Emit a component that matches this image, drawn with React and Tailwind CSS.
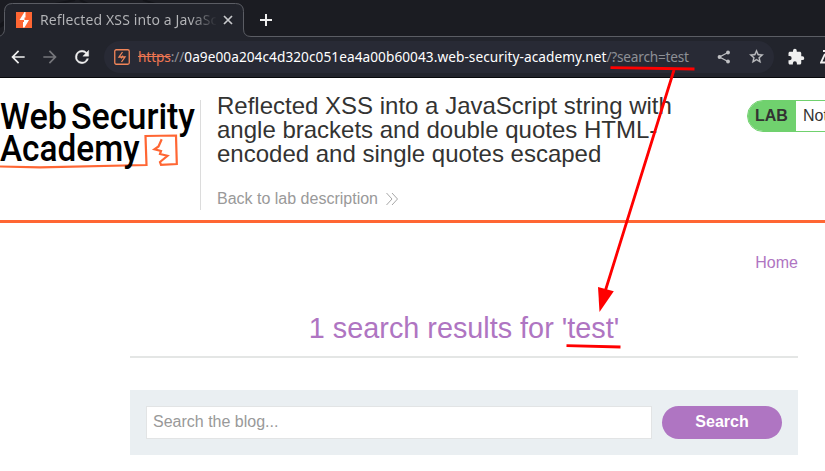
import React from 'react';

function TabStrip() {
  return (
    <div className="relative flex h-9 items-start bg-[#1b1c22]">
      <svg className="absolute left-0 top-0" width="825" height="37" viewBox="0 0 825 37" fill="none">
        <path d="M0 25L14 14M55 4L75 0M80 0l8 4M143 0l12 4M0 27l5-3" stroke="#131419" strokeWidth="2" />
        <path d="M-3 36.500C2 36.500 4.500 33 4.500 29V11.500Q4.500 3.500 12.500 3.500H235.500Q243.500 3.500 243.500 11.500V29Q243.500 36.500 251 36.500H825V37H-3Z" fill="#22242c" />
        <path d="M-3 36.500C2 36.500 4.500 33 4.500 29V11.500Q4.500 3.500 12.500 3.500H235.500Q243.500 3.500 243.500 11.500V29Q243.500 36.500 251 36.500H825" stroke="#5b5d64" />
      </svg>
      <div className="relative flex h-9 w-[243px] items-center pl-4 pt-[3px]">
        <svg width="16" height="16" viewBox="0 0 16 16" className="shrink-0">
          <path d="M0 0H16V16H0Z" fill="#ff6633" />
          <path d="M8.500 0H9.500V5.500H8.500V8H13L8.500 15.500H7V10H8V8H3.500Z" fill="#fff" />
        </svg>
        <div className="ml-2 w-[177px] overflow-hidden whitespace-nowrap bg-gradient-to-r from-[#b5b6b9] from-85% to-transparent bg-clip-text font-['Noto_Sans',sans-serif] text-[14px] leading-5 tracking-[0.12px] text-transparent">
          Reflected XSS into a JavaScript
        </div>
        <svg className="ml-[6px] shrink-0" width="10" height="10" viewBox="0 0 10 10" stroke="#c8c9cc" strokeWidth="1.700">
          <path d="M1 1L9 9M9 1L1 9" />
        </svg>
      </div>
      <svg className="relative ml-[17px] mt-[14px]" width="12" height="12" viewBox="0 0 12 12" stroke="#efefef" strokeWidth="2">
        <path d="M6 0V12M0 6H12" />
      </svg>
    </div>
  );
}

function AddressBar() {
  return (
    <div className="flex h-[41px] items-center bg-[#22242c]">
      <div className="flex w-[104px] shrink-0 items-center pl-[8px]">
        <svg className="shrink-0" width="20" height="20" viewBox="0 0 24 24" fill="#efefef">
          <path d="M20 11H7.830l5.590-5.590L12 4l-8 8 8 8 1.410-1.410L7.830 13H20v-2z" />
        </svg>
        <svg className="ml-[12px] shrink-0" width="20" height="20" viewBox="0 0 24 24" fill="#75767b">
          <path d="M12 4l-1.410 1.410L16.170 11H4v2h12.170l-5.580 5.590L12 20l8-8z" />
        </svg>
        <svg className="ml-[12px] shrink-0" width="20" height="20" viewBox="0 0 24 24" fill="#efefef">
          <path d="M17.650 6.350A7.960 7.960 0 0 0 12 4a8 8 0 1 0 7.730 10h-2.080A6 6 0 1 1 12 6c1.660 0 3.140.690 4.220 1.780L13 11h7V4l-2.350 2.350z" stroke="#efefef" strokeWidth=".5" />
        </svg>
      </div>
      <div className="flex h-8 w-[670px] shrink-0 items-center rounded-full bg-[#282a35] pl-[10px]">
        <svg className="shrink-0" width="16" height="16" viewBox="0 0 16 16" fill="none">
          <rect x=".75" y=".75" width="14.500" height="14.500" rx="1.500" stroke="#f28559" strokeWidth="1.300" />
          <path d="M8.500 3L5 8H7.500V9.500M8.500 6.500V8H11L7.500 13" stroke="#f28559" strokeWidth="1.300" />
        </svg>
        <div className="ml-2 flex w-[552px] shrink-0 whitespace-nowrap font-['Noto_Sans',sans-serif] text-[13.66px] leading-5 text-[#8e9096]">
          <span className="text-[#ee7652] line-through tracking-[-0.1px]">https</span>
          <span className="tracking-[-0.1px]">://</span>
          <span className="text-white tracking-[0.05px]">0a9e00a204c4d320c051ea4a00b60043.web-security-academy.net</span>
          <span className="tracking-[-0.22px]">/?search=test</span>
        </div>
        <svg className="ml-[27px] shrink-0" width="14" height="14" viewBox="0 0 14 14" fill="#bfc0c3">
          <path d="M11 2.500L2.500 7L11 11.500" fill="none" stroke="#bfc0c3" strokeWidth="1.300" />
          <circle cx="11" cy="2.500" r="1.900" />
          <circle cx="2.500" cy="7" r="1.900" />
          <circle cx="11" cy="11.500" r="1.900" />
        </svg>
        <svg className="ml-[17px] shrink-0" width="17" height="17" viewBox="0 0 24 24" fill="#bfc0c3" stroke="#bfc0c3" strokeWidth=".4">
          <path d="M22 9.240l-7.190-.620L12 2 9.190 8.630 2 9.240l5.460 4.730L5.820 21 12 17.270 18.180 21l-1.630-7.030L22 9.240zM12 15.400l-3.760 2.270 1-4.280-3.320-2.880 4.380-.380L12 6.100l1.710 4.040 4.380.380-3.320 2.880 1 4.280L12 15.400z" />
        </svg>
      </div>
      <svg className="ml-[13px] shrink-0" width="18" height="18" viewBox="0 0 24 24" fill="#efefef">
        <path d="M20.500 11H19V7c0-1.100-.9-2-2-2h-4V3.500a2.500 2.500 0 0 0-5 0V5H4c-1.100 0-2 .9-2 2v3.800h1.500a2.700 2.700 0 0 1 0 5.400H2V20c0 1.100.9 2 2 2h3.800v-1.500a2.700 2.700 0 0 1 5.400 0V22H17c1.100 0 2-.9 2-2v-4h1.500a2.500 2.500 0 0 0 0-5z" />
      </svg>
      <svg className="ml-[15px] shrink-0" width="5" height="14" viewBox="0 0 5 14">
        <path d="M3 1H5M5 4L1 12.500H5" fill="none" stroke="#efefef" strokeWidth="1.800" />
      </svg>
    </div>
  );
}

function AcademyLogo() {
  return (
    <svg className="shrink-0" width="200" height="72" viewBox="0 0 200 72" fontFamily="Roboto, sans-serif" fontWeight="500" fontSize="37">
      <text x="0" y="28.500" textLength="67" lengthAdjust="spacingAndGlyphs">Web</text>
      <text x="71" y="28.500" textLength="124" lengthAdjust="spacingAndGlyphs">Security</text>
      <path d="M0 66.500L40 67.300L146.500 65L145.500 36L176 35.500L176.800 64L161 64.800L160 62L167.500 55.800L160 54L161 51L154.500 49.300L158.500 46.500L161.700 39.300" fill="none" stroke="#ff6633" strokeWidth="2.200" />
      <text x="0" y="61" textLength="139.500" lengthAdjust="spacingAndGlyphs">Academy</text>
    </svg>
  );
}

function LabHeader() {
  return (
    <header className="flex h-[145px] border-b-[3px] border-[#ff6633] pt-[22px]">
      <div className="h-[110px] w-[201px] shrink-0 border-r border-[#dcdcdc]">
        <AcademyLogo />
      </div>
      <div className="ml-4 w-[480px] shrink-0">
        <h2 className="-mt-[6px] text-2xl leading-6 text-[#333332]">
          Reflected XSS into a JavaScript string with<br />
          angle brackets and double quotes HTML-<br />
          encoded and single quotes escaped
        </h2>
        <a className="mt-[21px] flex items-center text-base leading-6 text-[#999]">
          Back to lab description
          <svg className="ml-[8px]" width="12" height="14" viewBox="0 0 12 14" fill="none" stroke="#a6a6a6">
            <path d="M.5 1L6 7L.5 13M6 1L11.500 7L6 13" />
          </svg>
        </a>
      </div>
      <div className="ml-[50px] flex h-8 w-[180px] shrink-0 overflow-hidden rounded-l-full border border-[#70d16e] text-base leading-[30px] text-[#333332]">
        <span className="w-12 shrink-0 bg-[#70d16e] pl-[7px] font-bold leading-[30px]">LAB</span>
        <span className="ml-[7px] whitespace-nowrap">Not solved</span>
      </div>
    </header>
  );
}

function Blog() {
  return (
    <main className="ml-[130px] w-[668px]">
      <nav className="flex justify-end pt-7 text-base leading-6 text-[#af75c2]">Home</nav>
      <div className="mt-[31px] flex h-[52px] justify-center border-b-2 border-[#e4e6e5]">
        <h1 className="text-[28.8px] leading-[44px] text-[#af75c2]">1 search results for 'test'</h1>
      </div>
      <form className="mt-8 flex h-[65px] gap-[10px] bg-[#eaeff2] p-4">
        <div className="h-[33px] w-[506px] border border-[#e2e4e5] bg-white pl-[6px] text-base leading-[30px] text-[#999]">Search the blog...</div>
        <button type="button" className="h-[33px] w-[120px] rounded-full bg-[#af75c2] pb-px text-base font-bold leading-8 text-white">Search</button>
      </form>
    </main>
  );
}

export default function App() {
  return (
    <div className="relative h-[471px] w-[825px] overflow-hidden bg-white font-['Liberation_Sans',Arial,sans-serif]">
      <TabStrip />
      <AddressBar />
      <div className="h-px bg-[#08090c]" />
      <LabHeader />
      <Blog />
      <svg className="pointer-events-none absolute left-0 top-0" width="825" height="471" viewBox="0 0 825 471" stroke="#ff0000" strokeWidth="2.800">
        <path d="M610.500 67.700L694.500 69M674 70L604 295M566.500 345.700L620.500 347" />
        <path d="M598 287L613.800 291.300L599.500 312Z" fill="#ff0000" stroke="none" />
      </svg>
    </div>
  );
}
